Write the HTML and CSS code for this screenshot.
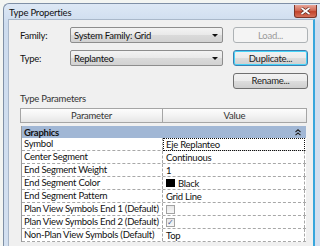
FILE: index.html
```html
<!DOCTYPE html>
<html>

<head>
    <title>Type Properties</title>
    <link rel="stylesheet" href="styles.css">
</head>

<body>
    <div class="window">
        <div class="titlebar">
            <span class="title">Type Properties</span>
            <span class="close">
                <svg width="11" height="8" viewBox="0 0 11 8">
                    <path d="M1.5 1 L9.5 7 M9.5 1 L1.5 7" stroke="#5a2a22" stroke-width="3" />
                    <path d="M1.5 1 L9.5 7 M9.5 1 L1.5 7" stroke="#ffffff" stroke-width="1.6" />
                </svg>
            </span>
        </div>

        <div class="content">
            <div class="form">
                <span class="label">Family:</span>
                <div class="combo">System Family: Grid <span class="arrow"></span></div>
                <div class="btn disabled">Load...</div>

                <span class="label">Type:</span>
                <div class="combo">Replanteo <span class="arrow"></span></div>
                <div class="btn default">Duplicate...</div>

                <span></span>
                <span></span>
                <div class="btn">Rename...</div>
            </div>

            <div class="section">Type Parameters</div>

            <div class="grid">
                <div class="grid-head">
                    <div class="head-cell">Parameter</div>
                    <div class="head-cell">Value</div>
                </div>
                <div class="grid-body">
                    <div class="group">
                        <span>Graphics</span>
                        <svg class="chevron" width="6" height="7" viewBox="0 0 6 7">
                            <path d="M0.5 3 L3 0.8 L5.5 3 M0.5 6.2 L3 4 L5.5 6.2" fill="none" stroke="#222" stroke-width="1.1" />
                        </svg>
                    </div>
                    <div class="row">
                        <div class="name">Symbol</div>
                        <div class="value focus">Eje Replanteo</div>
                    </div>
                    <div class="row">
                        <div class="name">Center Segment</div>
                        <div class="value">Continuous</div>
                    </div>
                    <div class="row">
                        <div class="name">End Segment Weight</div>
                        <div class="value">1</div>
                    </div>
                    <div class="row">
                        <div class="name">End Segment Color</div>
                        <div class="value"><span class="swatch"></span>Black</div>
                    </div>
                    <div class="row">
                        <div class="name">End Segment Pattern</div>
                        <div class="value">Grid Line</div>
                    </div>
                    <div class="row">
                        <div class="name">Plan View Symbols End 1 (Default)</div>
                        <div class="value"><span class="check"></span></div>
                    </div>
                    <div class="row">
                        <div class="name">Plan View Symbols End 2 (Default)</div>
                        <div class="value"><span class="check on">&#10003;</span></div>
                    </div>
                    <div class="row">
                        <div class="name">Non-Plan View Symbols (Default)</div>
                        <div class="value">Top</div>
                    </div>
                </div>
            </div>
        </div>
    </div>
</body>

</html>
```

FILE: styles.css
```css
body {
    margin: 0;
    width: 320px;
    height: 246px;
    overflow: hidden;
    background-color: #f3f5f2;
    font-family: Lato, "Noto Sans", sans-serif;
    font-size: 9.5px;
    letter-spacing: -0.25px;
    color: #111;
}

.window {
    margin: 3px 0 0 3px;
    height: 242px;
    padding-left: 4px;
    border-top: 1px solid #7f90a6;
    border-left: 1px solid #7f90a6;
    border-radius: 6px 0 0 0;
    background: linear-gradient(#dde8f5, #cddcee 20px, #d3e0f0);
    overflow: hidden;
}

.titlebar {
    height: 15px;
    display: flex;
    align-items: center;
    justify-content: space-between;
}

.title {
    font-size: 9.5px;
    letter-spacing: -0.2px;
    color: #111;
    margin-left: 1px;
    margin-top: 1px;
}

.close {
    width: 23px;
    height: 13px;
    margin-right: 3px;
    margin-top: -1px;
    display: flex;
    align-items: center;
    justify-content: center;
    box-sizing: border-box;
    border: 1px solid #7b3528;
    border-top: none;
    border-radius: 0 0 3px 3px;
    background: linear-gradient(#e7a597, #d26a55 45%, #c2442c 55%, #d5705a);
}

.content {
    height: 226px;
    margin-right: 5px;
    background-color: #f0f0f0;
    border: 1px solid #a9b8ca;
    border-bottom: none;
    border-right: 2px solid #38a6dc;
    overflow: hidden;
}

.form {
    display: grid;
    grid-template-columns: 40px 153px 75px;
    column-gap: 10px;
    grid-template-rows: 16px 16px 16px;
    row-gap: 7px;
    padding: 7px 0 0 11px;
    align-items: center;
}

.form .btn:last-child {
    margin-top: -1px;
}

.combo {
    height: 16px;
    box-sizing: border-box;
    display: flex;
    align-items: center;
    justify-content: space-between;
    padding: 0 4px 0 3px;
    border: 1px solid #8d8d8d;
    border-radius: 2px;
    background: linear-gradient(#f3f3f3, #e9e9e9 50%, #dadada 51%, #d2d2d2);
}

.arrow {
    width: 0;
    height: 0;
    border-left: 3px solid transparent;
    border-right: 3px solid transparent;
    border-top: 3px solid #111;
}

.btn {
    height: 16px;
    box-sizing: border-box;
    display: flex;
    align-items: center;
    justify-content: center;
    border: 1px solid #707070;
    border-radius: 3px;
    background: linear-gradient(#f2f2f2, #ebebeb 50%, #dddddd 51%, #cfcfcf);
    color: #222;
}

.btn.disabled {
    border-color: #adb2b5;
    background: #f4f4f4;
    color: #9a9a9a;
}

.btn.default {
    border-color: #3c7fb1;
    box-shadow: inset 0 0 0 1px #48d4f8;
}

.section {
    margin: 3px 0 0 11px;
    height: 14px;
    line-height: 14px;
    color: #333;
}

.grid {
    margin: 2px 0 0 11px;
    width: 287px;
}

.grid-head {
    display: grid;
    grid-template-columns: 143px 144px;
    height: 15px;
}

.head-cell {
    display: flex;
    align-items: center;
    justify-content: center;
    border: 1px solid #a5a5a5;
    background: linear-gradient(#fdfdfd, #f3f3f3 50%, #e6e6e6);
    color: #333;
}

.head-cell + .head-cell {
    border-left: none;
}

.grid-body {
    margin: 3px 0 0 1px;
    width: 284px;
    border-left: 1px solid #9a9a9a;
}

.group {
    height: 12px;
    display: flex;
    align-items: center;
    justify-content: space-between;
    padding: 0 5px 0 2px;
    background-color: #a1b7d5;
    font-weight: bold;
}

.row {
    display: grid;
    grid-template-columns: 141px 142px;
    height: 13px;
    box-sizing: border-box;
    border-bottom: 1px dashed #a8a8a8;
    background-color: #fff;
}

.name {
    padding-left: 2px;
    line-height: 12px;
    border-right: 1px dashed #a8a8a8;
    white-space: nowrap;
    overflow: hidden;
}

.value {
    display: flex;
    align-items: center;
    padding-left: 3px;
    border-right: 1px dashed #a8a8a8;
}

.value.focus {
    border: 1px dotted #111;
    margin-bottom: -1px;
    padding-left: 2px;
}

.swatch {
    width: 9px;
    height: 8px;
    margin-right: 3px;
    background-color: #000;
}

.check {
    width: 9px;
    height: 9px;
    box-sizing: border-box;
    display: flex;
    align-items: center;
    justify-content: center;
    border: 1px solid #a3a3a3;
    background: linear-gradient(#e8e8e8, #f7f7f7);
    font-size: 8px;
    color: #3d5b9a;
}
```
